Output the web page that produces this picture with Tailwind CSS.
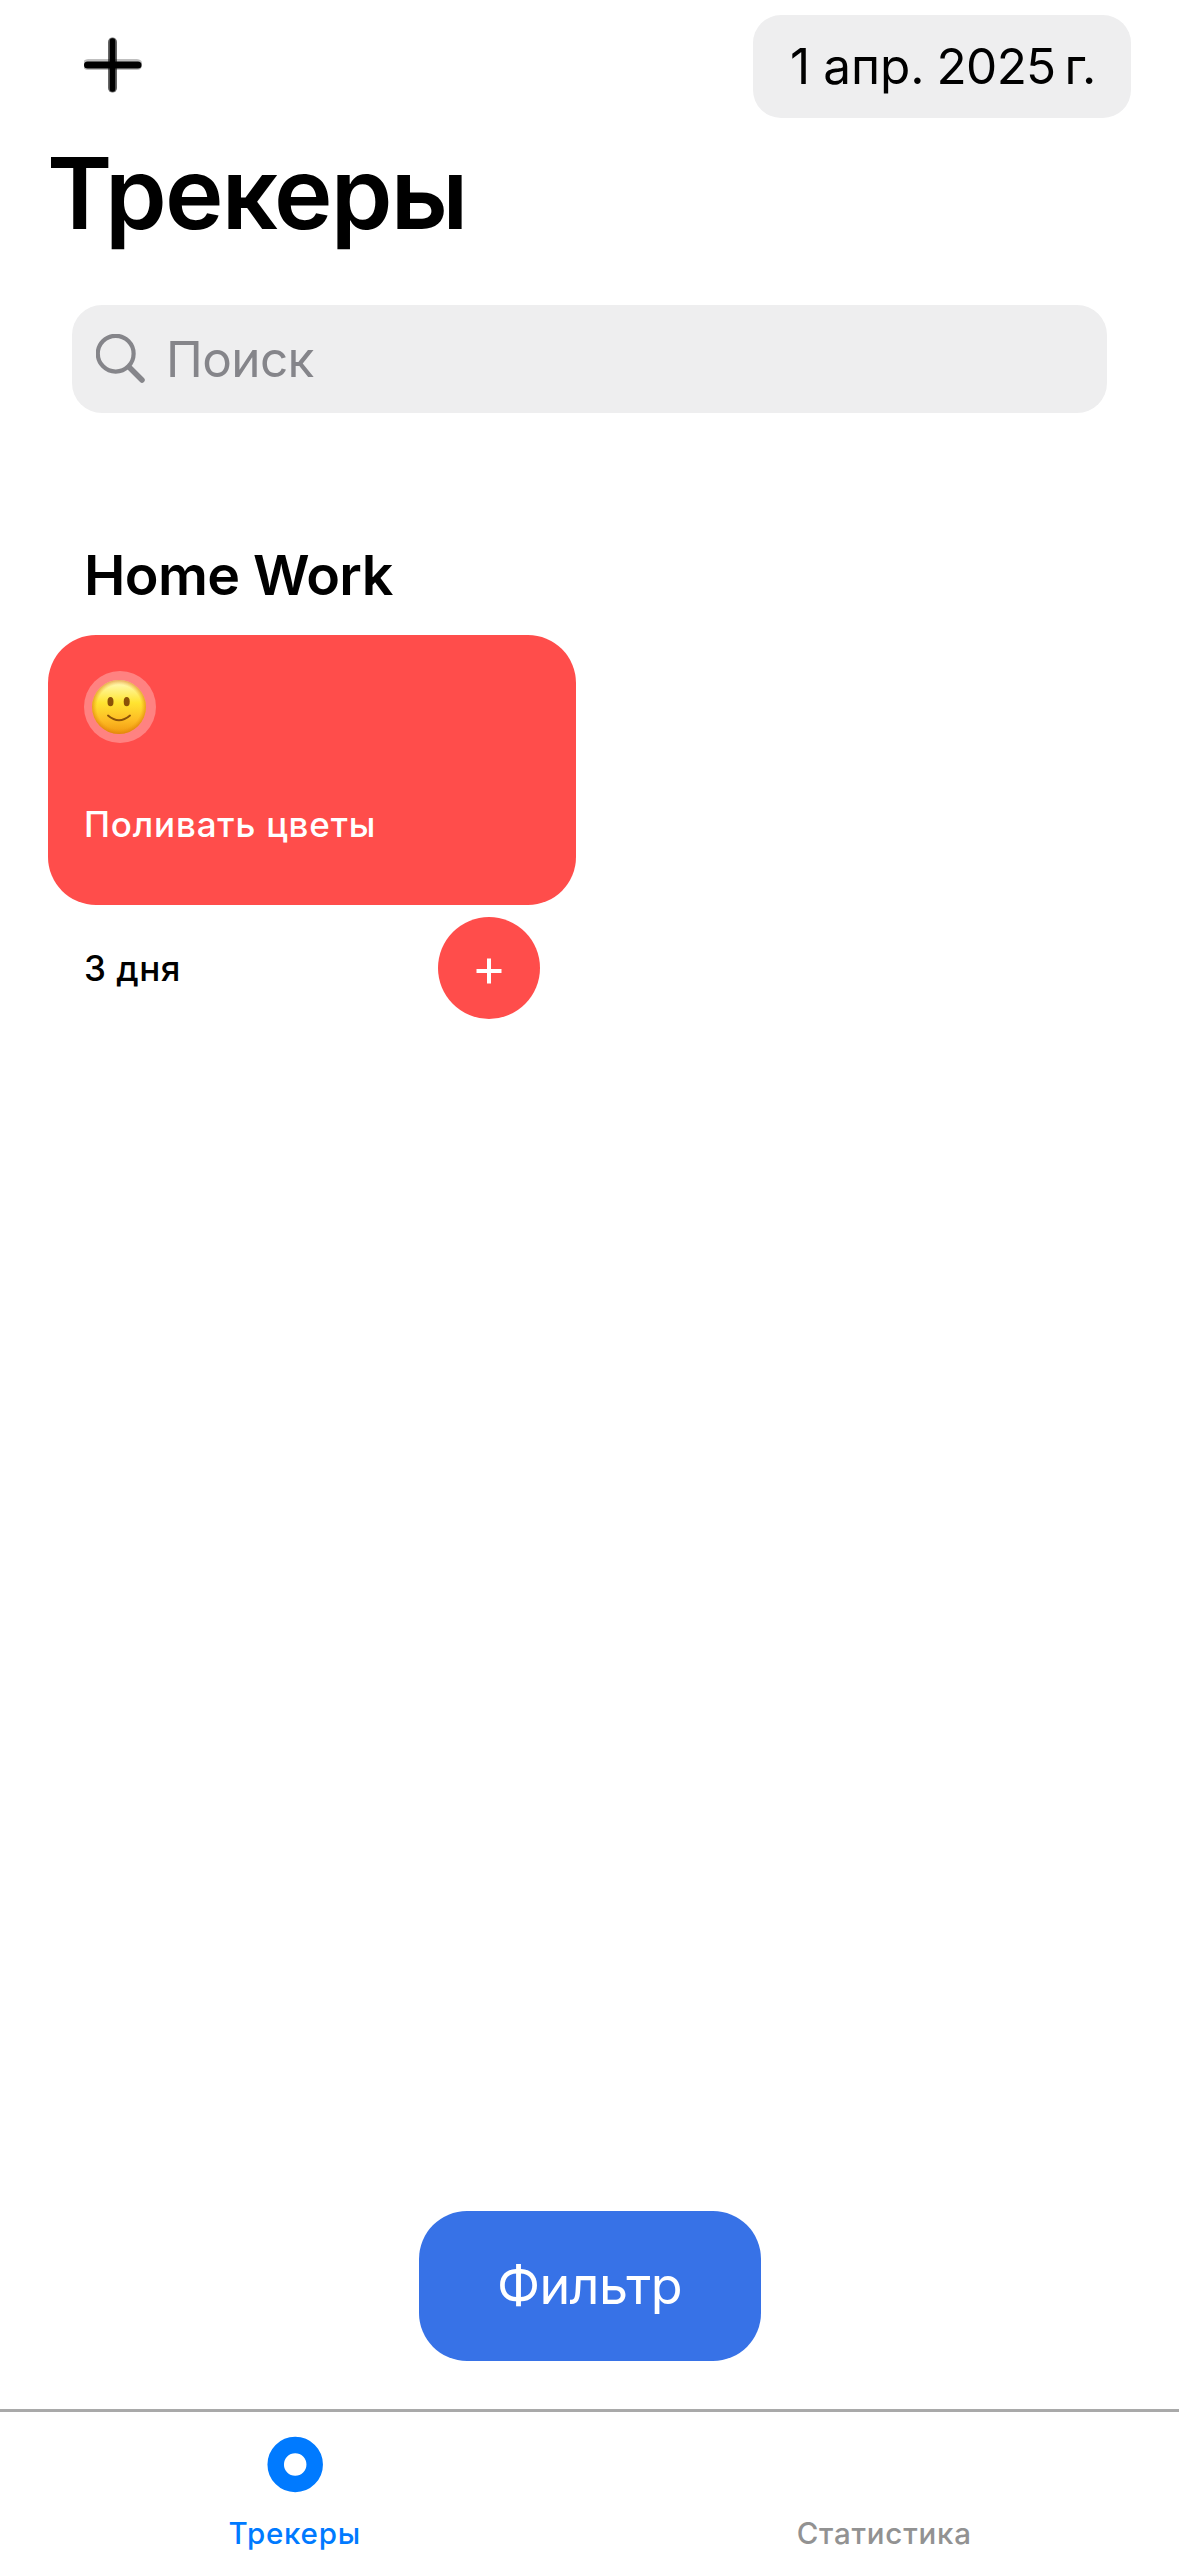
<!DOCTYPE html>
<html lang="ru">
<head>
<meta charset="utf-8">
<title>Трекеры</title>
<script src="https://cdn.jsdelivr.net/npm/@tailwindcss/browser@4"></script>
</head>
<body class="bg-white text-black font-['Inter',sans-serif]">
<div class="w-[1179px] h-[2556px] flex flex-col overflow-hidden whitespace-nowrap">
  <header class="h-[118px] pt-[15px] pl-[84px] pr-12 flex items-start justify-between">
    <svg class="w-[58px] h-[56px] mt-[22px]" viewBox="0 0 58 56" stroke="#000" stroke-linecap="round">
      <path d="M4 27.500H53" stroke-opacity=".25" stroke-width="11"/>
      <path d="M28.500 5V51" stroke-opacity=".6" stroke-width="9"/>
      <path d="M3.500 28H54" stroke-width="7"/>
      <path d="M28.500 4V52" stroke-width="5.500"/>
    </svg>
    <div class="w-[378px] h-[103px] rounded-[28px] bg-[#eeeeef] flex items-center pt-px pl-[37px] text-[49.500px] leading-none"><span>1</span><span class="ml-[13px]">апр.</span><span class="ml-[12px] tracking-[-0.700px]">2025</span><span class="ml-[9px] tracking-[-1px]">г.</span></div>
  </header>
  <h1 class="h-[150px] pl-[47px] flex items-center text-[99px] font-semibold leading-none tracking-[-1.800px]">Трекеры</h1>
  <div class="mt-[37px] mx-[72px] h-[108px] rounded-[30px] bg-[#eeeeef] flex items-center pl-6 text-[49.500px] leading-none text-[#85858a] tracking-[-0.600px]">
    <svg class="w-[50px] h-[50px] mr-5" viewBox="0 0 50 50" fill="none" stroke="currentColor" stroke-linecap="round"><circle cx="19.700" cy="19.700" r="17.900" stroke-width="4.200"/><path d="M33.500 33.500L46 46" stroke-width="5.500"/></svg>
    <span class="pt-[2px]">Поиск</span>
  </div>
  <section class="mt-[127px] px-12">
    <h2 class="h-[70px] pl-9 flex items-center text-[55.500px] font-semibold leading-none tracking-[-0.600px]">Home Work</h2>
    <div class="mt-[25px] w-[528px] h-[270px] rounded-[48px] bg-[#ff4d4b] pt-9 pl-9">
      <div class="size-[72px] rounded-full bg-white/30 pl-[7px] flex items-center">
        <svg class="size-[56px]" viewBox="0 0 56 56">
          <defs>
            <linearGradient id="face" x1="0" y1="0" x2="0" y2="1"><stop offset="0" stop-color="#fff9c8"/><stop offset=".15" stop-color="#fff48e"/><stop offset=".42" stop-color="#ffe431"/><stop offset=".75" stop-color="#fdbb24"/><stop offset="1" stop-color="#f0980f"/></linearGradient>
            <radialGradient id="rim"><stop offset=".82" stop-color="#e98a08" stop-opacity="0"/><stop offset="1" stop-color="#d87808" stop-opacity=".6"/></radialGradient>
          </defs>
          <circle cx="28" cy="28" r="27" fill="url(#face)"/>
          <circle cx="28" cy="28" r="27" fill="url(#rim)"/>
          <g fill="#8b5208"><ellipse cx="19.500" cy="22.700" rx="3" ry="4.600"/><ellipse cx="35.700" cy="22.700" rx="3" ry="4.600"/></g>
          <path d="M17 36.500Q28 46 39 36.500" fill="none" stroke="#8b5208" stroke-width="1.900" stroke-linecap="round"/>
        </svg>
      </div>
      <p class="mt-[63px] h-9 flex items-center text-[35px] font-medium leading-none text-white tracking-[0.800px]">Поливать цветы</p>
    </div>
    <div class="mt-3 w-[528px] h-[102px] px-9 flex items-center justify-between text-[35px] font-medium leading-none tracking-[0.500px]">
      <span>3 дня</span>
      <button class="size-[102px] rounded-full bg-[#ff4d4b] flex items-center justify-center">
        <svg class="w-[26px] h-[26px] mt-[6px]" viewBox="0 0 26 26" stroke="#fff" stroke-width="4"><path d="M0.500 13H25.500M13 0.500V25.500"/></svg>
      </button>
    </div>
  </section>
  <button class="mt-auto mx-auto h-[150px] w-[342px] rounded-[48px] bg-[#3772e7] flex items-center justify-center text-[52px] text-white leading-none tracking-[-0.600px]">Фильтр</button>
  <nav class="mt-12 h-[147px] border-t-[3px] border-[#a9a9a9] grid grid-cols-2 text-[29.500px] font-medium leading-none tracking-[0.800px]">
    <a class="flex flex-col items-center pt-[24px] text-[#007aff]">
      <svg class="size-[58px]" viewBox="0 0 58 58" fill="none" stroke="currentColor"><circle cx="29.200" cy="28.500" r="19.500" stroke-width="16.500"/></svg>
      <span class="mt-[25px]">Трекеры</span>
    </a>
    <a class="flex flex-col items-center pt-[107px] text-[#929292]">Статистика</a>
  </nav>
</div>
</body>
</html>
